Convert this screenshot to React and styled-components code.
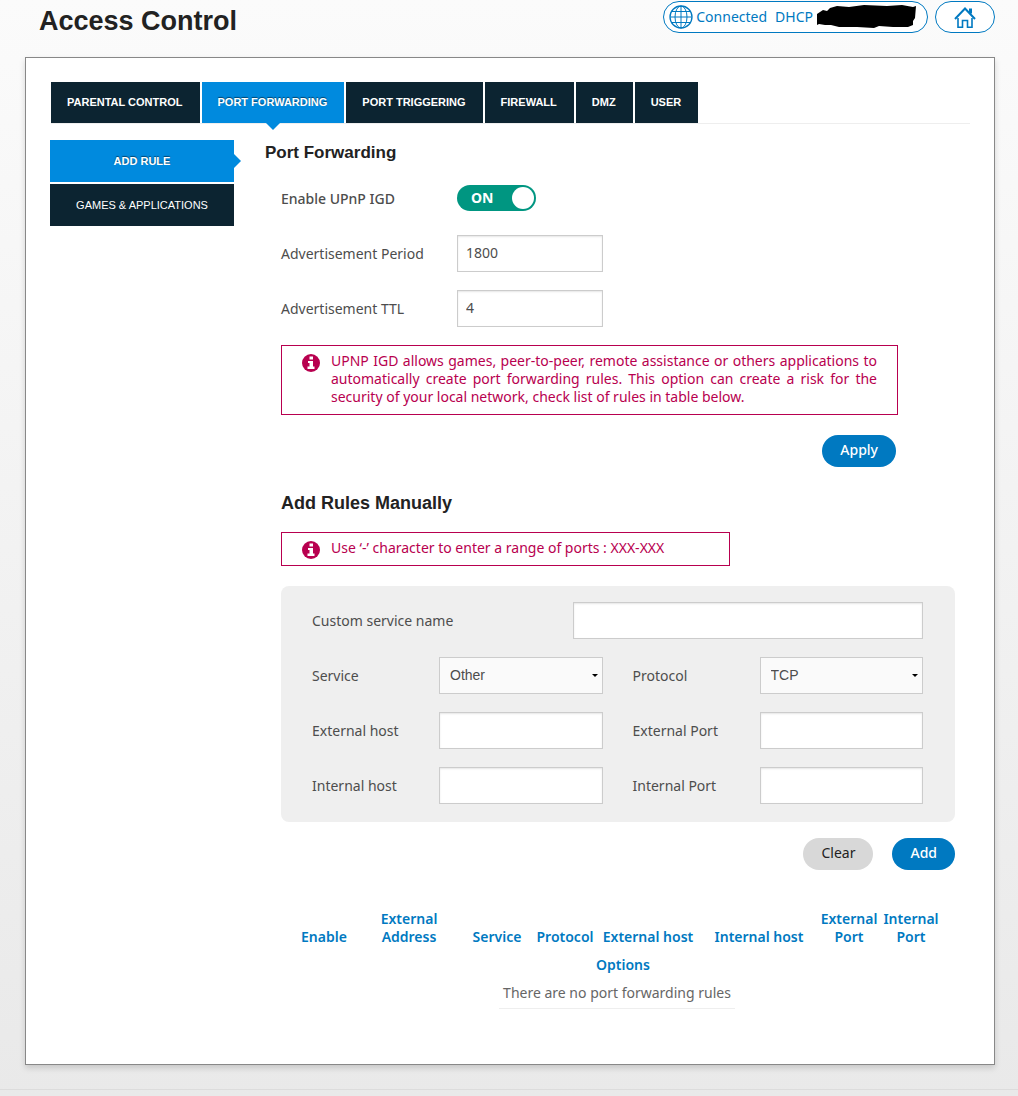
import React, { useState } from "react";
import styled, { createGlobalStyle, css } from "styled-components";

const BLUE = "#0079c1";
const BRIGHT = "#008ade";
const NAVY = "#0c2431";
const PINK = "#b8004f";
const ARIAL = '"Liberation Sans", Arial, sans-serif';

const GlobalStyle = createGlobalStyle`
  *, *::before, *::after { box-sizing: border-box; }
  html { min-height: 100%; background: linear-gradient(#fbfbfb, #e9e9e9); }
  body {
    margin: 0;
    color: #4d4d4d;
    font: 14px/18px "Noto Sans", sans-serif;
  }
  h1, h2, p { margin: 0; }
  button, input, select { font: inherit; }
`;

const Page = styled.div`
  padding: 1px 23px 0 25px;
`;

const Header = styled.header`
  display: flex;
  align-items: flex-start;
  gap: 7px;
  height: 56px;
`;

const Title = styled.h1`
  flex: 1;
  padding: 4px 0 0 14px;
  color: #222;
  font: bold 27px/32px ${ARIAL};
`;

const Pill = styled.a`
  display: flex;
  align-items: center;
  height: 32px;
  padding: ${(p) => (p.$icon ? "0 18px" : "0 10px 0 5px")};
  border: 1px solid ${BLUE};
  border-radius: 16px;
  background: #fff;
  color: ${BLUE};
  text-decoration: none;
  white-space: nowrap;
`;

const Status = styled.span`
  margin: 0 4px 0 3px;
`;

const Protocol = styled.span`
  margin: 0 4px;
`;

const Panel = styled.main`
  padding: 24px 24px 55px;
  border: 1px solid #888;
  background: #fff;
  box-shadow: 0 3px 6px rgba(0, 0, 0, 0.15);
`;

const Tabs = styled.nav`
  display: flex;
  gap: 2px;
  margin-left: 1px;
  border-bottom: 1px solid #eee;
`;

const navItem = css`
  position: relative;
  background: ${(p) => (p.$active ? BRIGHT : NAVY)};
  color: #fff;
  text-align: center;
  text-decoration: none;
  text-shadow: ${(p) => (p.$active ? "0 -1px 1px rgba(0, 0, 0, 0.5)" : "none")};
`;

const Tab = styled.a`
  ${navItem}
  padding: 0 17px 0 16px;
  font: bold 11px/41px ${ARIAL};

  &::after {
    content: "";
    display: ${(p) => (p.$active ? "block" : "none")};
    position: absolute;
    top: 100%;
    left: 50%;
    margin-left: -7px;
    border: 7px solid transparent;
    border-top-color: ${BRIGHT};
    border-bottom: 0;
  }
`;

const Columns = styled.div`
  display: flex;
  align-items: flex-start;
  gap: 31px;
  margin-top: 16px;
`;

const SideNav = styled.nav`
  display: flex;
  flex: 0 0 184px;
  flex-direction: column;
  gap: 2px;
`;

const SideLink = styled.a`
  ${navItem}
  font: ${(p) => (p.$active ? "bold" : "normal")} 11px/42px ${ARIAL};

  &::after {
    content: "";
    display: ${(p) => (p.$active ? "block" : "none")};
    position: absolute;
    left: 100%;
    top: 50%;
    margin-top: -7px;
    border: 7px solid transparent;
    border-left-color: ${BRIGHT};
    border-right: 0;
  }
`;

const Content = styled.section`
  flex: 1;
  min-width: 0;
`;

const Heading = styled.h2`
  margin-bottom: 14px;
  color: #222;
  font: bold 17px/26px ${ARIAL};
`;

const SubHeading = styled.h2`
  margin: 25px 0 18px;
  color: #222;
  font: bold 18px/22px ${ARIAL};
`;

const Body = styled.div`
  padding: 0 15px 0 16px;
`;

const Rows = styled.div`
  display: grid;
  gap: 18px;
`;

const Row = styled.div`
  display: grid;
  grid-template-columns: 176px 146px;
  align-items: center;
  height: 37px;
`;

const Label = styled.label`
  font-weight: ${(p) => (p.$strong ? 500 : 400)};
`;

const Input = styled.input`
  width: 100%;
  min-width: 0;
  height: 37px;
  padding: 0 8px 2px;
  border: 1px solid #ccc;
  border-radius: 0;
  background: #fff;
  box-shadow: inset 0 1px 2px rgba(0, 0, 0, 0.1);
  color: #4d4d4d;
`;

const Switch = styled.label`
  position: relative;
  display: flex;
  align-items: center;
  justify-content: space-between;
  flex-direction: ${(p) => (p.$on ? "row" : "row-reverse")};
  width: 79px;
  height: 26px;
  margin-bottom: 2px;
  padding: 0 2px;
  border-radius: 13px;
  background: ${(p) => (p.$on ? "#009681" : "#999")};
  color: #fff;
  font-weight: 700;
  cursor: pointer;

  input {
    position: absolute;
    inset: 0;
    width: 100%;
    height: 100%;
    margin: 0;
    opacity: 0;
  }
`;

const SwitchText = styled.span`
  padding: 0 12px;
`;

const Knob = styled.span`
  width: 22px;
  height: 22px;
  border-radius: 50%;
  background: #fff;
`;

const Notice = styled.div`
  display: flex;
  align-items: flex-start;
  gap: 11px;
  max-width: ${(p) => p.$width};
  margin-top: ${(p) => p.$top || 0};
  padding: 6px 20px;
  border: 1px solid ${PINK};
  color: ${PINK};
  text-align: justify;
`;

const NoticeIcon = styled.svg`
  flex: none;
  width: 18px;
  height: 20px;
`;

const NoticeText = styled.p`
  flex: 1;
  padding-bottom: 2px;
`;

const Actions = styled.div`
  display: flex;
  justify-content: flex-end;
  gap: 19px;
  max-width: ${(p) => p.$width || "none"};
  margin-top: ${(p) => p.$top};
`;

const Button = styled.button`
  height: 32px;
  padding: 0 18px 2px;
  border: 0;
  border-radius: 16px;
  background: ${(p) => (p.$muted ? "#d8d8d8" : BLUE)};
  color: ${(p) => (p.$muted ? "#222" : "#fff")};
  font-weight: ${(p) => (p.$muted ? 400 : 500)};
  cursor: pointer;
`;

const RuleForm = styled.form`
  display: grid;
  gap: 18px;
  margin-top: 20px;
  padding: 16px 32px 18px 31px;
  border-radius: 8px;
  background: #efefef;
`;

const NameField = styled.div`
  display: grid;
  grid-template-columns: 261px 1fr;
  align-items: center;
`;

const FieldPair = styled.div`
  display: grid;
  grid-template-columns: 1fr 1fr;
  gap: 30px;
`;

const Field = styled.div`
  display: grid;
  grid-template-columns: 127px 1fr;
  align-items: center;
`;

const SelectBox = styled.div`
  position: relative;
`;

const Select = styled.select`
  display: block;
  width: 100%;
  height: 37px;
  padding: 0 20px 2px 10px;
  appearance: none;
  border: 1px solid #ccc;
  border-radius: 0;
  background: #fafafa;
  color: #4d4d4d;
  font: 14px/18px ${ARIAL};
`;

const Caret = styled.svg`
  position: absolute;
  top: 17px;
  right: 5px;
  width: 6px;
  height: 3px;
  pointer-events: none;
`;

const TableArea = styled.div`
  margin-top: 35px;
  padding: 0 12px 0 10px;
`;

const Table = styled.table`
  width: 100%;
  table-layout: fixed;
  border-collapse: collapse;
`;

const HeadCell = styled.th`
  padding: 5px 0;
  color: ${BLUE};
  font-weight: 600;
  text-align: center;
  vertical-align: bottom;
`;

const OptionsCell = styled(HeadCell)`
  padding-left: 12px;
`;

const EmptyCell = styled.td`
  padding: 0;
  text-align: center;
`;

const EmptyText = styled.span`
  display: inline-block;
  padding: 5px 4px 6px;
  border-bottom: 1px solid #eee;
  color: #666;
`;

const Footer = styled.footer`
  height: 7px;
  margin: 24px -23px 0 -25px;
  border-top: 1px solid #dcdcdc;
`;

function Globe() {
  return (
    <svg width="24" height="24" viewBox="0 0 24 24" fill="none" stroke="currentColor" aria-hidden="true">
      <circle cx="12" cy="12" r="11" strokeWidth="1.3" />
      <ellipse cx="12" cy="12" rx="6" ry="11" />
      <path d="M12 1v22M1 12h22M3 6.5h18M3 17.500h18" />
    </svg>
  );
}

function Redaction() {
  return (
    <svg width="100" height="24" viewBox="0 0 100 24" aria-hidden="true">
      <path d="M0 9 6 5 10 6 13 3 20 1 32 2 47 0 70 1 85 0 96 2 99 1 98 13 96 16 96 20 91 22 76 22 62 21 57 23 40 22 22 22 14 20 8 20 2 19 0 20Z" />
    </svg>
  );
}

function House() {
  return (
    <svg width="22" height="24" viewBox="0 0 22 24" fill="none" stroke="currentColor" aria-hidden="true">
      <path d="M1 14 11 3.500 21 14" strokeWidth="2" />
      <path d="M4 13v9.200h4.500v-6.700h5v6.700H18V13" strokeWidth="1.600" />
      <path d="M16.500 3.500v5" strokeWidth="3" />
    </svg>
  );
}

function InfoNotice({ width, top, children }) {
  return (
    <Notice $width={width} $top={top}>
      <NoticeIcon viewBox="0 0 18 20" aria-hidden="true">
        <circle cx="9" cy="11" r="9" fill={PINK} />
        <path d="M7.500 4.500h3.500v3H7.500zM6 9h5v5.500h1.500v2.500H5.500v-2.500H7.500V11H6z" fill="#fff" />
      </NoticeIcon>
      <NoticeText>{children}</NoticeText>
    </Notice>
  );
}

function TextField({ id, label }) {
  return (
    <Field>
      <Label htmlFor={id}>{label}</Label>
      <Input id={id} type="text" />
    </Field>
  );
}

function SelectField({ id, label, options }) {
  return (
    <Field>
      <Label htmlFor={id}>{label}</Label>
      <SelectBox>
        <Select id={id}>
          {options.map((o) => (
            <option key={o}>{o}</option>
          ))}
        </Select>
        <Caret viewBox="0 0 6 3" aria-hidden="true">
          <path d="M0 0h6L3 3z" />
        </Caret>
      </SelectBox>
    </Field>
  );
}

const tabs = ["PARENTAL CONTROL", "PORT FORWARDING", "PORT TRIGGERING", "FIREWALL", "DMZ", "USER"];

const columns = [
  ["Enable", 66],
  ["External Address", 104],
  ["Service", 72],
  ["Protocol", 64],
  ["External host", 102],
  ["Internal host", 120],
  ["External Port", 60],
  ["Internal Port", 64],
];

export default function App() {
  const [on, setOn] = useState(true);
  return (
    <>
      <GlobalStyle />
      <Page>
        <Header>
          <Title>Access Control</Title>
          <Pill href="#status">
            <Globe />
            <Status>Connected</Status>
            <Protocol>DHCP</Protocol>
            <Redaction />
          </Pill>
          <Pill href="#home" $icon aria-label="Home">
            <House />
          </Pill>
        </Header>
        <Panel>
          <Tabs>
            {tabs.map((t) => (
              <Tab key={t} href="#tab" $active={t === "PORT FORWARDING"}>
                {t}
              </Tab>
            ))}
          </Tabs>
          <Columns>
            <SideNav>
              <SideLink href="#add" $active>ADD RULE</SideLink>
              <SideLink href="#games">GAMES &amp; APPLICATIONS</SideLink>
            </SideNav>
            <Content>
              <Heading>Port Forwarding</Heading>
              <Body>
                <Rows>
                  <Row>
                    <Label htmlFor="upnp" $strong>Enable UPnP IGD</Label>
                    <Switch $on={on}>
                      <SwitchText>{on ? "ON" : "OFF"}</SwitchText>
                      <Knob />
                      <input id="upnp" type="checkbox" checked={on} onChange={(e) => setOn(e.target.checked)} />
                    </Switch>
                  </Row>
                  <Row>
                    <Label htmlFor="period">Advertisement Period</Label>
                    <Input id="period" type="text" defaultValue="1800" />
                  </Row>
                  <Row>
                    <Label htmlFor="ttl">Advertisement TTL</Label>
                    <Input id="ttl" type="text" defaultValue="4" />
                  </Row>
                </Rows>
                <InfoNotice width="617px" top="18px">
                  UPNP IGD allows games, peer-to-peer, remote assistance or others applications to
                  automatically create port forwarding rules. This option can create a risk for the
                  security of your local network, check list of rules in table below.
                </InfoNotice>
                <Actions $top="20px" $width="615px">
                  <Button type="button">Apply</Button>
                </Actions>
                <SubHeading>Add Rules Manually</SubHeading>
                <InfoNotice width="449px">
                  Use ‘-’ character to enter a range of ports : XXX-XXX
                </InfoNotice>
                <RuleForm id="rule">
                  <NameField>
                    <Label htmlFor="name">Custom service name</Label>
                    <Input id="name" type="text" />
                  </NameField>
                  <FieldPair>
                    <SelectField id="service" label="Service" options={["Other"]} />
                    <SelectField id="protocol" label="Protocol" options={["TCP", "UDP"]} />
                  </FieldPair>
                  <FieldPair>
                    <TextField id="exthost" label="External host" />
                    <TextField id="extport" label="External Port" />
                  </FieldPair>
                  <FieldPair>
                    <TextField id="inthost" label="Internal host" />
                    <TextField id="intport" label="Internal Port" />
                  </FieldPair>
                </RuleForm>
                <Actions $top="16px">
                  <Button type="reset" form="rule" $muted>Clear</Button>
                  <Button type="button">Add</Button>
                </Actions>
                <TableArea>
                  <Table>
                    <colgroup>
                      {columns.map(([name, width]) => (
                        <col key={name} width={width} />
                      ))}
                    </colgroup>
                    <thead>
                      <tr>
                        {columns.map(([name]) => (
                          <HeadCell key={name} scope="col">{name}</HeadCell>
                        ))}
                      </tr>
                      <tr>
                        <OptionsCell colSpan={8}>Options</OptionsCell>
                      </tr>
                    </thead>
                    <tbody>
                      <tr>
                        <EmptyCell colSpan={8}>
                          <EmptyText>There are no port forwarding rules</EmptyText>
                        </EmptyCell>
                      </tr>
                    </tbody>
                  </Table>
                </TableArea>
              </Body>
            </Content>
          </Columns>
        </Panel>
        <Footer />
      </Page>
    </>
  );
}
